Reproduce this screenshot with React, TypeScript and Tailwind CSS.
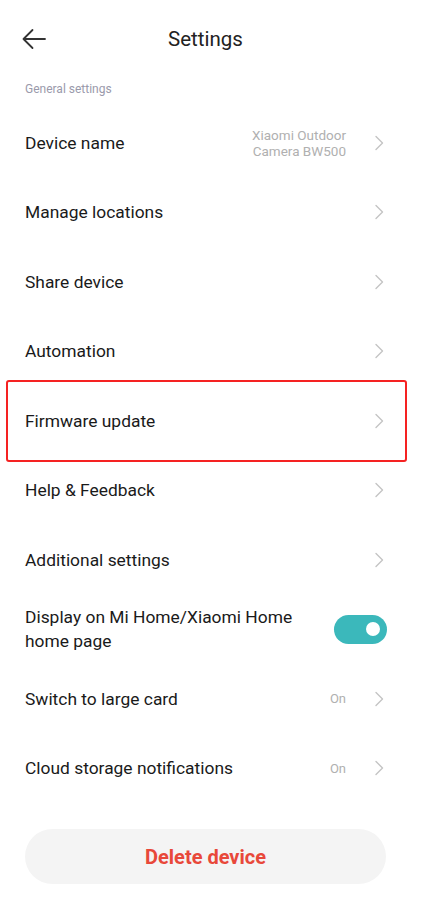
import React from "react";

const Chevron = () => (
  <svg width="10" height="16" viewBox="0 0 10 16" fill="none" className="shrink-0">
    <path d="M2 1.5 L8.5 8 L2 14.5" stroke="#c4c4c4" strokeWidth="1.4" strokeLinecap="round" strokeLinejoin="round" />
  </svg>
);

type RowProps = { label: React.ReactNode; right?: React.ReactNode; highlight?: boolean; chevron?: boolean };

const Row = ({ label, right, highlight, chevron = true }: RowProps) => (
  <div className="relative flex h-[69.5px] items-center pl-[25px] pr-[43px]">
    {highlight && (
      <div className="pointer-events-none absolute left-[6px] right-[20px] top-[-6px] bottom-[-6px] rounded-[3px] border-2 border-[#f52222]" />
    )}
    <div className="flex-1 text-[17.4px] leading-[24px] text-[#1a1a1a]">{label}</div>
    {right}
    {chevron && <Chevron />}
  </div>
);

const OnText = () => <span className="mr-[28px] text-[13px] text-[#b0b0b0]">On</span>;

export default function App() {
  return (
    <div className="min-h-[916px] w-[427px] bg-white" style={{ fontFamily: "Roboto, 'Noto Sans', sans-serif" }}>
      <div className="relative flex h-[78px] items-center justify-center pr-[16px]">
        <svg className="absolute left-[21px] top-[28px]" width="26" height="22" viewBox="0 0 26 22" fill="none">
          <path d="M24 11 H2.5 M11.5 2 L2.5 11 L11.5 20" stroke="#333" strokeWidth="1.8" strokeLinecap="round" strokeLinejoin="round" />
        </svg>
        <span className="text-[20.5px] text-[#222]">Settings</span>
      </div>
      <div className="h-[30px] pl-[25px] pt-[4px] text-[12px] leading-[14px] text-[#9a9aab]">General settings</div>
      <Row
        label="Device name"
        right={
          <div className="mr-[28px] text-right text-[13.5px] leading-[16px] text-[#b0b0b0]">
            Xiaomi Outdoor
            <br />
            Camera BW500
          </div>
        }
      />
      <Row label="Manage locations" />
      <Row label="Share device" />
      <Row label="Automation" />
      <Row label="Firmware update" highlight />
      <Row label="Help & Feedback" />
      <Row label="Additional settings" />
      <div className="flex h-[69.5px] items-center pl-[25px] pr-[40px]">
        <div className="flex-1 text-[17.4px] leading-[24px] text-[#1a1a1a]">
          Display on Mi Home/Xiaomi Home
          <br />
          home page
        </div>
        <div className="flex h-[29px] w-[53px] items-center justify-end rounded-full bg-[#3bb8bb] pr-[7px]">
          <div className="h-[14px] w-[14px] rounded-full bg-white" />
        </div>
      </div>
      <Row label="Switch to large card" right={<OnText />} />
      <Row label="Cloud storage notifications" right={<OnText />} />
      <div className="px-[25px] pt-[26px]">
        <button className="flex h-[55px] w-[361px] items-center justify-center rounded-full bg-[#f4f4f4] text-[20px] font-bold text-[#e8483a]">
          Delete device
        </button>
      </div>
    </div>
  );
}
